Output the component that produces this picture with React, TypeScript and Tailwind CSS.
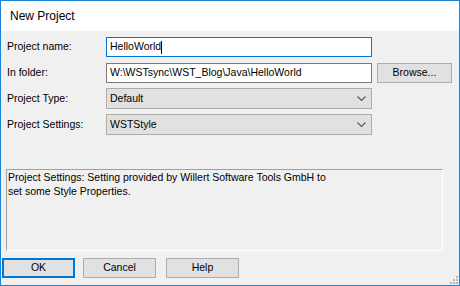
import React from "react";

function Chevron() {
  return (
    <svg width="9" height="5" viewBox="0 0 9 5" className="shrink-0">
      <path d="M0.5 0.5 L4.5 4.5 L8.5 0.5" fill="none" stroke="#5c5c5c" strokeWidth="1.2" />
    </svg>
  );
}

function Row({ label, children }: { label: string; children: React.ReactNode }) {
  return (
    <div className="flex items-center">
      <div className="w-[99px] pl-[6px] pr-0 box-content">{label}</div>
      {children}
    </div>
  );
}

function Select({ value }: { value: string }) {
  return (
    <div className="w-[266px] h-[21px] flex items-center justify-between bg-[#e1e1e1] border border-[#adadad] pl-[3px] pr-[5px]">
      <span>{value}</span>
      <Chevron />
    </div>
  );
}

const buttonCls =
  "h-[20px] w-[73px] flex items-center justify-center bg-[#e1e1e1] border border-[#adadad]";

export default function App() {
  return (
    <div
      className="w-[460px] h-[286px] flex flex-col border border-[#1883d7] bg-[#f0f0f0] text-black text-[10.5px] overflow-hidden"
      style={{ fontFamily: '"Liberation Sans", Arial, sans-serif' }}
    >
      {/* title bar */}
      <div className="h-[30px] shrink-0 bg-white flex items-center pl-[9px] text-[12px] text-black">
        New Project
      </div>

      <div className="flex flex-col pt-[6px] relative flex-1">
        <Row label="Project name:">
          <div className="w-[266px] h-[20px] flex items-center bg-white border border-[#0078d7] pl-[3px]">
            <span>HelloWorld</span>
            <span className="w-px h-[13px] bg-black" />
          </div>
        </Row>

        <div className="mt-[6px]">
          <Row label="In folder:">
            <div className="w-[266px] h-[20px] flex items-center bg-white border border-[#7a7a7a] pl-[3px]">
              W:\WSTsync\WST_Blog\Java\HelloWorld
            </div>
            <div className={"ml-[5px] w-[75px] h-[20px] flex items-center justify-center bg-[#e1e1e1] border border-[#adadad]"}>
              Browse...
            </div>
          </Row>
        </div>

        <div className="mt-[5px]">
          <Row label="Project Type:">
            <Select value="Default" />
          </Row>
        </div>

        <div className="mt-[5px]">
          <Row label="Project Settings:">
            <Select value="WSTStyle" />
          </Row>
        </div>

        {/* description */}
        <div className="mt-[34px] ml-[5px] w-[437px] h-[82px] border-t border-l border-[#a0a0a0] border-b-white border-r-white border-b border-r pl-[1px] leading-[14px]">
          Project Settings: Setting provided by Willert Software Tools GmbH to
          <br />
          set some Style Properties.
        </div>

        {/* buttons */}
        <div className="mt-[7px] flex items-center">
          <div className="ml-[1px] h-[20px] w-[73px] flex items-center justify-center bg-[#e1e1e1] border-2 border-[#0078d7]">
            OK
          </div>
          <div className={"ml-[8px] " + buttonCls}>Cancel</div>
          <div className={"ml-[10px] " + buttonCls}>Help</div>
        </div>

        {/* size grip */}
        <svg width="8" height="8" viewBox="0 0 8 8" className="absolute right-[1px] bottom-[1px]">
          <rect x="6" y="0" width="2" height="2" fill="#b8b8b8" />
          <rect x="3" y="3" width="2" height="2" fill="#b8b8b8" />
          <rect x="6" y="3" width="2" height="2" fill="#b8b8b8" />
          <rect x="0" y="6" width="2" height="2" fill="#b8b8b8" />
          <rect x="3" y="6" width="2" height="2" fill="#b8b8b8" />
          <rect x="6" y="6" width="2" height="2" fill="#b8b8b8" />
        </svg>
      </div>
    </div>
  );
}
